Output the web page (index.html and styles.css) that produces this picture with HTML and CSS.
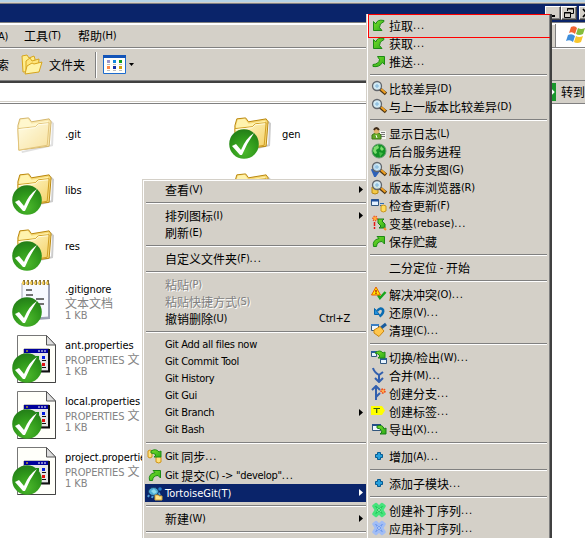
FILE: index.html
```
<!DOCTYPE html>
<html lang="zh-CN">
<head>
<meta charset="utf-8">
<title>资源管理器</title>
<link rel="stylesheet" href="styles.css">
</head>
<body>
<svg class="defs" width="0" height="0">
  <defs>
    <linearGradient id="fold" x1="0" y1="0" x2="1" y2="1"><stop offset="0" stop-color="#fffbd2"/><stop offset="1" stop-color="#f4cf62"/></linearGradient>
    <radialGradient id="ball" cx=".5" cy=".75" r=".75"><stop offset="0" stop-color="#4cb82c"/><stop offset=".6" stop-color="#2f981b"/><stop offset="1" stop-color="#237d18"/></radialGradient>
    <linearGradient id="gr" x1="0" y1="0" x2="1" y2="1"><stop offset="0" stop-color="#7be02a"/><stop offset="1" stop-color="#2cab18"/></linearGradient>
  </defs>
  <symbol id="folder" viewBox="0 0 44 44">
    <path d="M10 40L41 33L42 11L39 8" fill="none" stroke="#999" stroke-width="2" opacity=".5"/>
    <path d="M6 13L8 6L17 5L20 9L38 6L40 9L38 34L7 38z" fill="#f7d978" stroke="#b8860b"/>
    <path d="M7 14L9 7L16 6L20 11L37 8L36 28L9 32z" fill="#fff3ad"/>
    <path d="M6 16L24 14L27 11L38 10L36 33L7 38z" fill="url(#fold)" stroke="#cf9d22"/>
    <path d="M7 17L24 15L27 12L37 11" fill="none" stroke="#fffce2"/>
  </symbol>
  <symbol id="ok" viewBox="0 0 30 30">
    <circle cx="15" cy="15" r="14.8" fill="url(#ball)"/>
    <path d="M3 17L7 15L12 21Q17 9 25 4Q18 14 13 26L11 26z" fill="#fff"/>
  </symbol>
  <symbol id="note" viewBox="0 0 44 44">
    <path d="M10 5H37L37 39L10 41z" fill="#f7f9ff" stroke="#a5a9bb"/>
    <path d="M37 6V40L12 42" fill="none" stroke="#9ba0b4" stroke-width="2"/>
    <path d="M12 7V2M16 7V2M20 7V2M24 7V2M28 7V2M32 7V2M36 7V2" stroke="#8c7432" stroke-width="2"/>
    <path d="M10 5H37" stroke="#f3cd5c" stroke-width="3" stroke-dasharray="2 2"/>
    <path d="M14 12h6M14 17h7M24 21h8M14 22h6M25 26h7" stroke="#444" stroke-width="1.500"/>
  </symbol>
  <symbol id="prop" viewBox="0 0 44 48">
    <path d="M5.500 .5H34.500L43.500 10V47.500H5.500z" fill="#fffffa" stroke="#777"/>
    <path d="M43.500 10V47.500H5.500" fill="none" stroke="#444"/>
    <path d="M34.500 .5V10H43.500z" fill="#ddd" stroke="#555"/>
    <path d="M12 14H37V36H12z" fill="#e6e6e6" stroke="#888"/>
    <path d="M37 14V36.500H12" fill="none" stroke="#111" stroke-width="2"/>
    <path d="M12 14H36V18H12z" fill="#00009c"/>
    <path d="M26 16h2M29 16h2M32 16h2" stroke="#fff"/><path d="M14 16h2" stroke="#fd0"/>
    <path d="M17 21h3v3h-3zM30 21h3v3h-3z" fill="#0019e0"/><path d="M24 21h3v3h-3z" fill="#168a16"/>
    <path d="M17 28h3v3h-3zM30 28h3v3h-3z" fill="#e01010"/><path d="M24 28h3v3h-3z" fill="#a01010"/>
    <path d="M30 25.500h4M30 32.500h4M24 25.500h3M24 32.500h3" stroke="#111"/>
  </symbol>
  <symbol id="pull" viewBox="0 0 16 16"><path d="M2.500 4.500V13.500H11L8.500 10.500Q8 6.500 13 4.500V3.500Q6 2 4.800 7z" fill="url(#gr)" stroke="#1d8a14"/></symbol>
  <symbol id="push" viewBox="0 0 16 16"><path d="M2 11.500Q8 11 8.500 6.500L6.500 3.500H13.500V11.500L11.500 9.500Q8.500 14.500 2 13.500z" fill="url(#gr)" stroke="#1d8a14"/></symbol>
  <symbol id="up" viewBox="0 0 16 16"><path d="M2.500 13.500Q1 7 8 5.500L6 3.500H13.500V11L11 8.500Q6 8.500 5.500 13.500z" fill="url(#gr)" stroke="#1d8a14"/></symbol>
  <symbol id="mag" viewBox="0 0 16 16"><path d="M9 9L15 14" stroke="#4c3515" stroke-width="3.500"/><path d="M10 9L14.500 13" stroke="#f0a020" stroke-width="2"/><circle cx="6" cy="6" r="4.500" fill="#d0effc" fill-opacity=".85" stroke="#62666c" stroke-width="1.300"/><path d="M4 6h4M6 4v4" stroke="#7fb4da"/></symbol>
  <symbol id="log" viewBox="0 0 16 16"><path d="M9 6h6v8H9z" fill="#f4f4ef"/><path d="M10 7.500h4M10 9.500h4M10 11.500h4" stroke="#777"/><path d="M1 14V10L4 8H8L10 10V14z" fill="#62a827" stroke="#3f751b"/><circle cx="5.500" cy="6" r="2.800" fill="#e2b36f"/><path d="M3 5Q5 1 8 5" stroke="#3d2a18" stroke-width="2" fill="none"/><path d="M5 10l1 3" stroke="#fff"/></symbol>
  <symbol id="globe" viewBox="0 0 16 16"><circle cx="8" cy="8" r="7" fill="#119225" stroke="#6b9b73"/><path d="M3 4L7 2L8 5L5 7L6 10L4 11L2 8zM10 3L13 6L11 8L9 6z" fill="#7fdc70"/><path d="M8 9L12 10L9 14z" fill="#46bb48"/></symbol>
  <symbol id="graph" viewBox="0 0 16 16"><path d="M1 8L4 15L9 8M4 14V3" stroke="#2e61b8" stroke-width="2.400" fill="none"/><use href="#mag"/></symbol>
  <symbol id="repo" viewBox="0 0 16 16"><path d="M1 8h6v6Q4 16 1 14z" fill="#f4ca46" stroke="#b88912"/><use href="#mag"/></symbol>
  <symbol id="check" viewBox="0 0 16 16"><path d="M.5 2.500h7v6h-7z" fill="#e2f1ff" stroke="#31567d"/><path d="M0 3.500h8" stroke="#1e4f9b" stroke-width="2"/><path d="M9 6.500h4M9 8.500h4" stroke="#2f6db5"/><path d="M10 9Q12 7 15 9V14Q12 16 10 14z" fill="#ffdc5c" stroke="#c79420"/></symbol>
  <symbol id="rebase" viewBox="0 0 16 16"><path d="M3.500 7V11M3.500 12V14" stroke="#e11818" stroke-width="1.500"/><circle cx="4" cy="3.500" r="2.200" fill="#ffb13b" stroke="#ed4825" stroke-width="1.500" stroke-dasharray="1 1"/><path d="M7 4H13L11 6L14 9V13H8L10 11L7 8z" fill="url(#gr)" stroke="#187c18"/><path d="M13 13l2 2" stroke="#f49028" stroke-width="2"/></symbol>
  <symbol id="resolve" viewBox="0 0 16 16"><path d="M7 9L9 12L14.500 6" stroke="#17a51d" stroke-width="2.500" fill="none"/><path d="M5 1L9.500 9H.5z" fill="#ffe600" stroke="#e65b00"/><path d="M5 4V6.500M5 7V8" stroke="#b01010" stroke-width="1.300"/></symbol>
  <symbol id="revert" viewBox="0 0 16 16"><path d="M6 7Q10 2.500 12 6Q13 9 8.500 12.500" stroke="#0a6cb2" stroke-width="2.600" fill="none"/><path d="M3.500 4.500V10.500H8.500z" fill="#2493df" stroke="#0864a8"/></symbol>
  <symbol id="clean" viewBox="0 0 16 16"><path d="M.5 2.500h7v6h-7z" fill="#edf5ff" stroke="#31567d"/><path d="M0 3h8" stroke="#3c7fc3" stroke-width="2"/><path d="M10 6L15 2" stroke="#175b9e" stroke-width="3"/><path d="M3 8L9 4.500L13 9L8 14.500L3 11z" fill="#ffc64c" stroke="#c98712"/></symbol>
  <symbol id="switch" viewBox="0 0 16 16"><path d="M.5 2.500h5v5h-5zM9.500 9.500h6v5h-6z" fill="#e6f3ff" stroke="#31567d"/><path d="M0 3h6M9 10h7" stroke="#286097" stroke-width="2"/><path d="M4 4Q9 0 12 4L14 3V9H7L9 7Q7 4 4 4z" fill="url(#gr)" stroke="#218b17"/></symbol>
  <symbol id="merge" viewBox="0 0 16 16"><path d="M2 1Q3 5 8 8L12 5M8 8V14M4 11L8 15L12 11" stroke="#315fae" stroke-width="2" fill="none"/></symbol>
  <symbol id="branch" viewBox="0 0 16 16"><path d="M5 15V2M1 5L5 1L9 5M5 12L9 8" stroke="#315fae" stroke-width="2" fill="none"/><circle cx="12" cy="6" r="2" fill="#ffb34e" stroke="#ee4b1c" stroke-width="1.600" stroke-dasharray="1.500 .8"/></symbol>
  <symbol id="tag" viewBox="0 0 16 16"><path d="M0 3H11L14 7.500L11 12H0z" fill="#ff0"/><path d="M2.500 5.500H9M5.700 5V10" stroke="#345c12" stroke-width="1.200"/></symbol>
  <symbol id="export" viewBox="0 0 16 16"><path d="M1.500 3.500h8v6h-8z" fill="#ecf5ff" stroke="#31567d"/><path d="M1 4h9" stroke="#224d89" stroke-width="2"/><path d="M6 5Q12 3 13 8L15 7V13H9L11 11Q10 7 6 7z" fill="url(#gr)" stroke="#187c18"/></symbol>
  <symbol id="plus" viewBox="0 0 16 16"><path d="M6.500 4.500h3v2h2v3h-2v2h-3v-2h-2v-3h2z" fill="#27a0dc" stroke="#075a91"/></symbol>
  <symbol id="patch" viewBox="0 0 16 16"><path d="M2.500 4L5 2L8 5L11 2L13.500 4L11 8L13.500 12L11 14L8 11L5 14L2.500 12L5 8z" stroke-width="2.600" stroke-linejoin="round"/><path d="M6 6l4 4M10 6l-4 4" stroke="#fff" opacity=".4"/></symbol>
  <symbol id="sync" viewBox="0 0 16 16"><path d="M1 3Q3 1 5 3V9Q3 11 1 9zM9 9Q12 7 14 9V14Q12 16 9 14z" fill="#ffe07a" stroke="#cf9216"/><path d="M4 3Q9 0 12 4L14 3V9H7L9 7Q7 5 4 5z" fill="url(#gr)" stroke="#218b17"/></symbol>
  <symbol id="turtle" viewBox="0 0 16 16"><path d="M2 10l-1 2M6 10l-1 3M11 7l2 3" stroke="#4fa0d8" stroke-width="2"/><ellipse cx="6.500" cy="6.500" rx="5" ry="4" fill="#4daad5" stroke="#173e68"/><path d="M4 6l3-2 3 3-3 2z" fill="#8dd9ed"/><circle cx="13" cy="4" r="1.800" fill="#237eca"/><path d="M8 10h3l1 1h3v4H8z" fill="#ffe38a" stroke="#d0a43a"/></symbol>
  <symbol id="arrow" viewBox="0 0 4 7"><path d="M0 0L4 3.500L0 7z"/></symbol>
</svg>

<div class="window">
  <div class="edge"></div>
  <div class="titlebar">
    <span class="wbtn"><svg width="14" height="12"><path d="M4 9h5" stroke="#000" stroke-width="2"/></svg></span>
    <span class="wbtn"><svg width="14" height="12"><path d="M5.500 4V1.500h6v5H9M5 2h7M2.500 5.500h6v5h-6zM2 6h7" fill="none" stroke="#000"/></svg></span>
    <span class="wbtn last"><svg width="14" height="12"><path d="M3 2l7 8M10 2l-7 8" stroke="#000" stroke-width="1.600"/></svg></span>
  </div>
  <div class="menubar">
    <span class="m1"><i>A)</i></span><span class="m2">工具<i>(T)</i></span><span class="m3">帮助<i>(H)</i></span>
    <div class="brand"><svg width="22" height="20" viewBox="0 0 22 20"><path d="M5 2Q9 0 11 3L9 9Q6 6 3 8z" fill="#f26532"/><path d="M12 3Q15 5 19 3L17 9Q13 11 10 9z" fill="#84bd3d"/><path d="M2 10Q6 8 9 11L7 17Q4 14 0 16z" fill="#3f8edb"/><path d="M10 11Q13 13 17 11L15 17Q11 19 8 17z" fill="#f8c62d"/></svg></div>
  </div>
  <div class="toolbar">
    <span class="t1">索</span>
    <svg class="tfold" width="23" height="21" viewBox="0 0 23 21"><path d="M1 2L6 1L8 4L13 2L14 5L13 17L2 18z" fill="#ffed8c" stroke="#d7a51d"/><path d="M5 7L9 4L11 7L18 5L17 17L5 19z" fill="#ffe67c" stroke="#d7a51d"/><path d="M4 20L6 12L11 9L13 10L21 8L18 18z" fill="#fff3a5" stroke="#d7a51d"/></svg>
    <span class="t2">文件夹</span>
    <span class="tsep"></span>
    <svg class="views" width="23" height="19"><path d="M.5 .5h22v18H.5z" fill="#fffffa" stroke="#1c6bce"/><path d="M0 1.500h23" stroke="#1254b8" stroke-width="3"/><path d="M4 5h3v3H4z" fill="#9a94c8"/><path d="M10 5h3v3h-3z" fill="#1288e0"/><path d="M16 5h3v3h-3z" fill="#109c20"/><path d="M4 11h3v3H4z" fill="#ff8748"/><path d="M10 11h3v3h-3z" fill="#132fa8"/><path d="M16 11h3v3h-3z" fill="#d3a010"/><path d="M4 9.500h3m3 0h3m3 0h3M4 15.500h3m3 0h3m3 0h3" stroke="#bbb"/></svg>
    <svg class="drop" width="5" height="3"><path d="M0 0h5L2.500 3z"/></svg>
  </div>
  <div class="address"><div class="field"></div><svg class="go" width="9" height="18"><path d="M0 0h8v18H0z" fill="#18962b"/><path d="M1 5l4 4-4 4" fill="none" stroke="#fff" stroke-width="2.500"/></svg><span>转到</span></div>
  <div class="files">
    <div class="file pale"><div class="pic"><svg class="big"><use href="#folder"/></svg></div><div class="name">.git</div></div>
    <div class="file"><div class="pic"><svg class="big"><use href="#folder"/></svg><svg class="badge"><use href="#ok"/></svg></div><div class="name">gen</div></div>
    <div class="file"><div class="pic"><svg class="big"><use href="#folder"/></svg><svg class="badge"><use href="#ok"/></svg></div><div class="name">libs</div></div>
    <div class="file"><div class="pic"><svg class="big"><use href="#folder"/></svg></div></div>
    <div class="file"><div class="pic"><svg class="big"><use href="#folder"/></svg><svg class="badge"><use href="#ok"/></svg></div><div class="name">res</div></div><div></div>
    <div class="file"><div class="pic"><svg class="pad"><use href="#note"/></svg><svg class="badge"><use href="#ok"/></svg></div><div class="name">.gitignore<p><b>文本文档</b></p><p>1 KB</p></div></div><div></div>
    <div class="file"><div class="pic"><svg class="doc"><use href="#prop"/></svg><svg class="badge"><use href="#ok"/></svg></div><div class="name">ant.properties<p>PROPERTIES <b>文</b></p><p>1 KB</p></div></div><div></div>
    <div class="file"><div class="pic"><svg class="doc"><use href="#prop"/></svg><svg class="badge"><use href="#ok"/></svg></div><div class="name">local.properties<p>PROPERTIES <b>文</b></p><p>1 KB</p></div></div><div></div>
    <div class="file"><div class="pic"><svg class="doc"><use href="#prop"/></svg><svg class="badge"><use href="#ok"/></svg></div><div class="name">project.properties<p>PROPERTIES <b>文</b></p><p>1 KB</p></div></div><div></div>
  </div>
</div>

<div class="menu context">
  <div class="row">查看<i>(V)</i><svg class="arr"><use href="#arrow"/></svg></div>
  <hr>
  <div class="row">排列图标<i>(I)</i><svg class="arr"><use href="#arrow"/></svg></div>
  <div class="row">刷新<i>(E)</i></div>
  <hr>
  <div class="row">自定义文件夹<i>(F)<s>...</s></i></div>
  <hr>
  <div class="row off">粘贴<i>(P)</i></div>
  <div class="row off">粘贴快捷方式<i>(S)</i></div>
  <div class="row">撤销删除<i>(U)</i><i class="key">Ctrl+Z</i></div>
  <hr>
  <div class="row"><i>Git Add all files now</i></div>
  <div class="row"><i>Git Commit Tool</i></div>
  <div class="row"><i>Git History</i></div>
  <div class="row"><i>Git Gui</i></div>
  <div class="row"><i>Git Branch</i><svg class="arr"><use href="#arrow"/></svg></div>
  <div class="row"><i>Git Bash</i></div>
  <hr>
  <div class="row tall first"><svg class="ico"><use href="#sync"/></svg><i>Git&nbsp;</i>同步<i><s>...</s></i></div>
  <div class="row tall"><svg class="ico"><use href="#up"/></svg><i>Git&nbsp;</i>提交<i>(C) -&gt; "develop"<s>...</s></i></div>
  <div class="row tall hot"><svg class="ico"><use href="#turtle"/></svg><i class="wide">TortoiseGit(T)</i><svg class="arr"><use href="#arrow"/></svg></div>
  <hr class="tight">
  <div class="row">新建<i>(W)</i><svg class="arr"><use href="#arrow"/></svg></div>
  <hr>
</div>

<div class="menu sub">
  <div class="row pick"><svg class="ico"><use href="#pull"/></svg>拉取<i><s>...</s></i></div>
  <div class="row"><svg class="ico"><use href="#pull"/></svg>获取<i><s>...</s></i></div>
  <div class="row"><svg class="ico"><use href="#push"/></svg>推送<i><s>...</s></i></div>
  <hr>
  <div class="row"><svg class="ico"><use href="#mag"/></svg>比较差异<i>(D)</i></div>
  <div class="row"><svg class="ico"><use href="#mag"/></svg>与上一版本比较差异<i>(D)</i></div>
  <hr>
  <div class="row"><svg class="ico"><use href="#log"/></svg>显示日志<i>(L)</i></div>
  <div class="row"><svg class="ico"><use href="#globe"/></svg>后台服务进程</div>
  <div class="row"><svg class="ico"><use href="#graph"/></svg>版本分支图<i>(G)</i></div>
  <div class="row"><svg class="ico"><use href="#repo"/></svg>版本库浏览器<i>(R)</i></div>
  <div class="row"><svg class="ico"><use href="#check"/></svg>检查更新<i>(F)</i></div>
  <div class="row"><svg class="ico"><use href="#rebase"/></svg>变基<i class="wide">(rebase)<s>...</s></i></div>
  <div class="row"><svg class="ico"><use href="#up"/></svg>保存贮藏</div>
  <hr>
  <div class="row short">二分定位<i>&nbsp;-&nbsp;</i>开始</div>
  <hr>
  <div class="row"><svg class="ico"><use href="#resolve"/></svg>解决冲突<i>(O)<s>...</s></i></div>
  <div class="row"><svg class="ico"><use href="#revert"/></svg>还原<i>(V)<s>...</s></i></div>
  <div class="row"><svg class="ico"><use href="#clean"/></svg>清理<i>(C)<s>...</s></i></div>
  <hr>
  <div class="row"><svg class="ico"><use href="#switch"/></svg>切换<i>/</i>检出<i>(W)<s>...</s></i></div>
  <div class="row"><svg class="ico"><use href="#merge"/></svg>合并<i>(M)<s>...</s></i></div>
  <div class="row"><svg class="ico"><use href="#branch"/></svg>创建分支<i><s>...</s></i></div>
  <div class="row"><svg class="ico"><use href="#tag"/></svg>创建标签<i><s>...</s></i></div>
  <div class="row"><svg class="ico"><use href="#export"/></svg>导出<i>(X)<s>...</s></i></div>
  <hr>
  <div class="row"><svg class="ico"><use href="#plus"/></svg>增加<i>(A)<s>...</s></i></div>
  <hr>
  <div class="row"><svg class="ico"><use href="#plus"/></svg>添加子模块<i><s>...</s></i></div>
  <hr>
  <div class="row"><svg class="ico green"><use href="#patch"/></svg>创建补丁序列<i><s>...</s></i></div>
  <div class="row"><svg class="ico blue"><use href="#patch"/></svg>应用补丁序列<i><s>...</s></i></div>
</div>
</body>
</html>
```
FILE: styles.css
```
* { box-sizing: border-box; }
html, body { margin: 0; height: 538px; overflow: hidden; }
body { position: relative; width: 585px; background: #fff; color: #000; font: 12px/18px "Noto Sans CJK SC", sans-serif; white-space: nowrap; }
i { font: 11px/17px "DejaVu Sans Condensed", "DejaVu Sans", sans-serif; letter-spacing: -0.3px; }
i.wide { letter-spacing: 0; }
s { text-decoration: none; letter-spacing: 0.9px; }
.defs { position: absolute; }
svg { display: block; flex: none; }

.edge { height: 4px; background: #b5d3e7; border-bottom: 1px solid #808080; box-shadow: inset 0 -1px #d4d0c8; }
.titlebar { height: 18px; background: #0a246a; display: flex; padding: 2px 0 0 545px; gap: 0; overflow: hidden; }
.wbtn { flex: none; width: 16px; height: 14px; background: #d4d0c8; border: 1px solid; border-color: #fff #404040 #404040 #fff; box-shadow: inset -1px -1px #808080; }
.wbtn.last { margin-left: 2px; }
.menubar { height: 26px; background: #d4d0c8; border-top: 1px solid #808080; border-bottom: 1px solid #808080; box-shadow: inset 0 2px #fff; display: flex; align-items: center; }
.menubar span { flex: none; display: flex; padding-top: 2px; }
.m1 { width: 24px; margin-left: -2px; }
.m2 { width: 54px; margin-left: 2px; }
.brand { margin-left: auto; width: 30px; height: 23px; margin-top: 1px; background: #fff; border-left: 1px solid #808080; padding: 1px 0 0 10px; overflow: hidden; }
.toolbar { height: 33px; background: #d4d0c8; border-top: 1px solid #fff; border-bottom: 1px solid #808080; display: flex; align-items: center; }
.t1 { margin-left: -3px; width: 24px; }
.t2 { margin-left: 5px; width: 46px; }
.tsep { width: 2px; height: 26px; background: #808080; border-right: 1px solid #fff; margin-right: 6px; }
.drop { margin-left: 3px; }
.address { height: 23px; background: #d4d0c8; display: flex; align-items: center; border-bottom: 1px solid #808080; }
.field { width: 550px; height: 22px; background: #fff; border-top: 2px solid #404040; border-bottom: 1px solid #fff; box-shadow: inset 0 -1px #d4d0c8; }
.address span { margin-left: 4px; }

.files { display: grid; grid-template-columns: 217px 217px; grid-auto-rows: 56px; padding-top: 2px; height: 434px; overflow: hidden; }
.file { display: flex; align-items: center; }
.pic { position: relative; width: 65px; height: 56px; flex: none; }
.big { width: 43px; height: 43px; margin: 7px 0 0 12px; }
.pad { width: 44px; height: 44px; margin: 4px 0 0 12px; }
.doc { width: 44px; height: 48px; margin: 5px 0 0 12px; }
.badge { position: absolute; left: 12px; top: 23px; width: 30px; height: 30px; }
.pale .big { opacity: .6; }
.name { font: 11px/13px "DejaVu Sans Condensed", "DejaVu Sans", sans-serif; letter-spacing: -0.1px; }
.name p { margin: 0; height: 13px; color: #848484; }
.name b { font: 12px/13px "Noto Sans CJK SC", sans-serif; letter-spacing: 0; }

.menu { position: absolute; background: #d4d0c8; }
.context { left: 142px; top: 179px; width: 226px; height: 359px; border-left: 1px solid #d4d0c8; border-top: 1px solid #d4d0c8; box-shadow: inset 1px 1px #fff; padding: 1px 1px 0 2px; overflow: hidden; }
.sub { left: 366px; top: 14px; width: 186px; height: 524px; border-left: 1px solid #d4d0c8; border-right: 2px solid #404040; box-shadow: inset 1px 0 #fff, inset -1px 0 #808080; padding: 2px 2px 0 2px; overflow: hidden; }
.row { position: relative; display: flex; align-items: center; height: 17px; line-height: 17px; padding-left: 20px; }
.sub .row { height: 18px; }
.sub .short { height: 17px; }
.menu hr { height: 2px; margin: 4px 1px 3px; border: 0; background: #808080; border-bottom: 1px solid #fff; }
.menu hr.tight { margin-top: 3px; }
.context .tall { height: 18px; }
.context .first { height: 19px; }
.ico { position: absolute; left: 2px; top: 1px; width: 16px; height: 16px; }
.arr { position: absolute; right: 4px; top: 5px; width: 4px; height: 7px; fill: currentColor; }
.off { color: #808080; text-shadow: 1px 1px #fff; }
.key { position: absolute; right: 17px; }
.hot { background: #0a246a; color: #fff; }
.pick::after { content: ""; position: absolute; left: -1px; top: -2px; width: 182px; height: 22px; border: 1px solid #f00; }
.green { fill: #22c858; stroke: #45e37c; }
.blue { fill: #6c98ed; stroke: #a1bdf5; }
```
